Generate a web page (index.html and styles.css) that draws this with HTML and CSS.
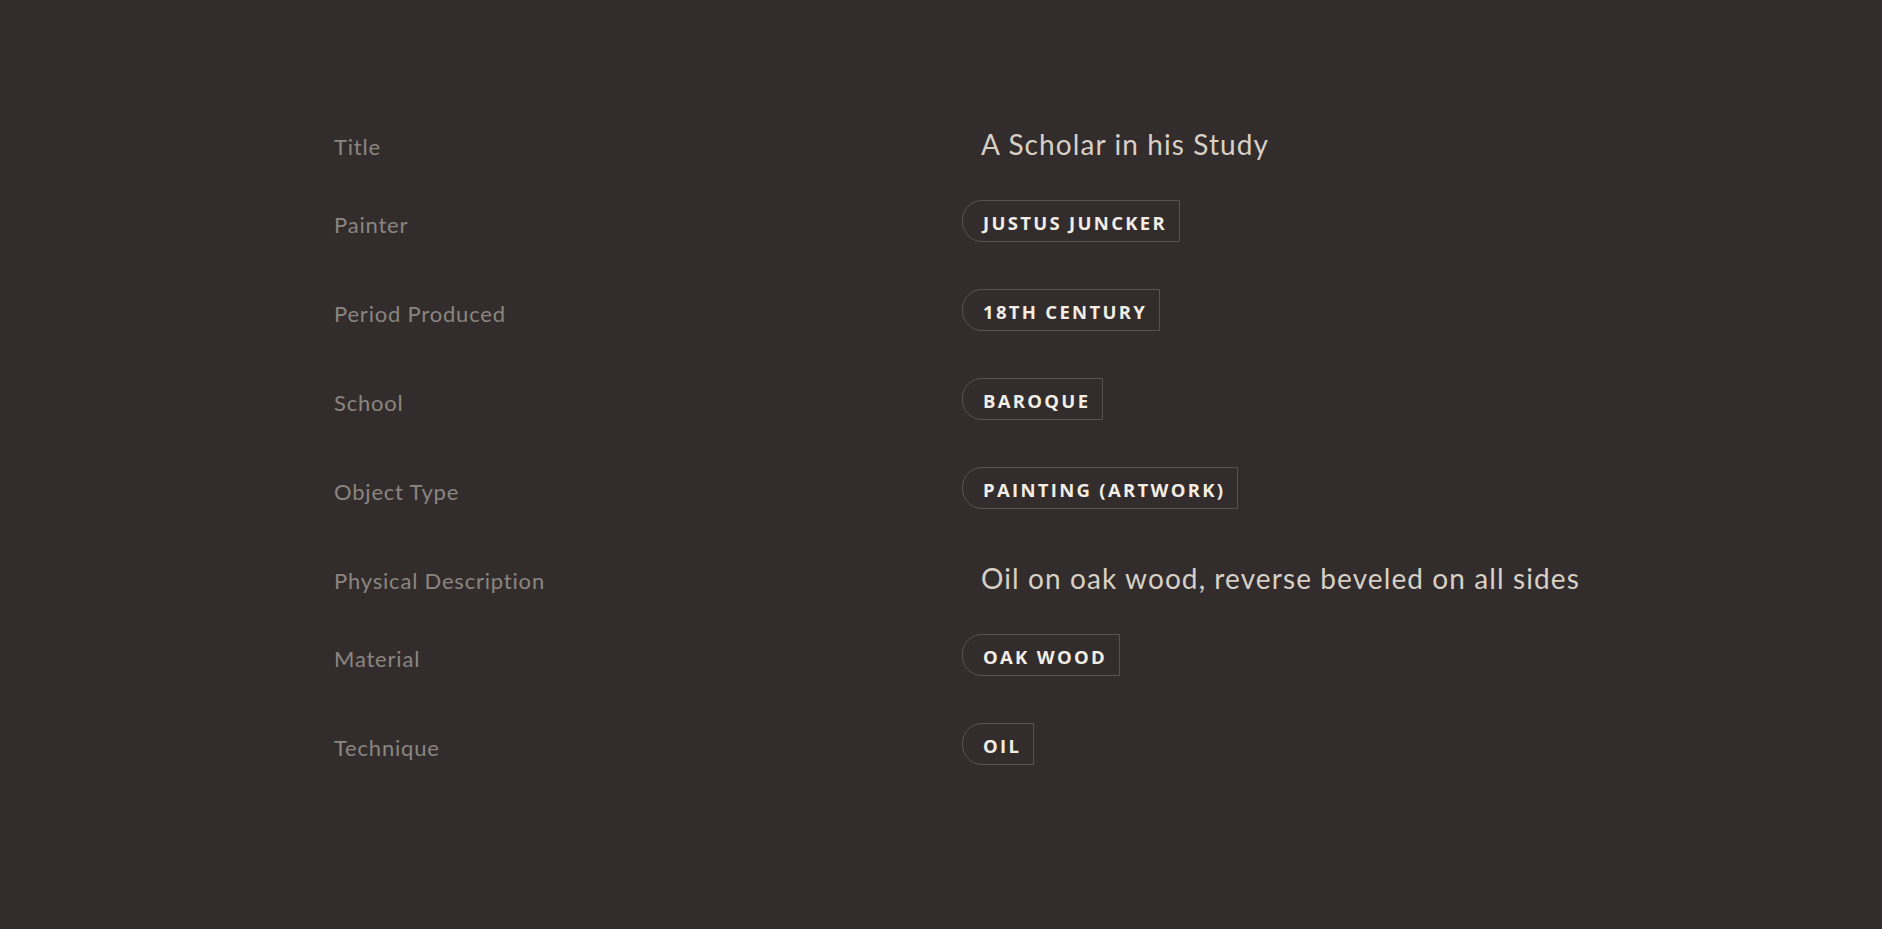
FILE: index.html
```html
<!DOCTYPE html>
<html lang="en">
<head>
<meta charset="utf-8">
<title>A Scholar in his Study</title>
<link rel="stylesheet" href="styles.css">
</head>
<body>
<main class="details">
  <dl class="meta">
    <div class="row row-text">
      <dt class="label">Title</dt>
      <dd class="value"><span class="text">A Scholar in his Study</span></dd>
    </div>
    <div class="row row-tag">
      <dt class="label">Painter</dt>
      <dd class="value"><span class="tag">Justus Juncker</span></dd>
    </div>
    <div class="row row-tag">
      <dt class="label">Period Produced</dt>
      <dd class="value"><span class="tag">18th Century</span></dd>
    </div>
    <div class="row row-tag">
      <dt class="label">School</dt>
      <dd class="value"><span class="tag">Baroque</span></dd>
    </div>
    <div class="row row-tag">
      <dt class="label">Object Type</dt>
      <dd class="value"><span class="tag">Painting (Artwork)</span></dd>
    </div>
    <div class="row row-text">
      <dt class="label">Physical Description</dt>
      <dd class="value"><span class="text">Oil on oak wood, reverse beveled on all sides</span></dd>
    </div>
    <div class="row row-tag">
      <dt class="label">Material</dt>
      <dd class="value"><span class="tag">Oak Wood</span></dd>
    </div>
    <div class="row row-tag">
      <dt class="label">Technique</dt>
      <dd class="value"><span class="tag">Oil</span></dd>
    </div>
  </dl>
</main>
</body>
</html>
```

FILE: styles.css
```css
html, body {
  margin: 0;
  padding: 0;
  background: #322d2c;
  height: 100%;
}

body {
  font-family: Lato, "Open Sans", sans-serif;
}

.details {
  padding: 122px 0 0 334px;
}

.meta {
  margin: 0;
}

.row {
  display: grid;
  grid-template-columns: 628px 1fr;
  align-items: start;
}

.row-text {
  height: 78px;
}

.row-tag {
  height: 89px;
}

.label {
  margin: 0;
  font-size: 22px;
  letter-spacing: 0.8px;
  line-height: 44px;
  padding-top: 3px;
  color: #8b8580;
}

.value {
  margin: 0;
}

.text {
  display: block;
  padding-left: 19px;
  font-size: 28px;
  letter-spacing: 1.1px;
  line-height: 44px;
  color: #d8d0c6;
}

.tag {
  display: inline-flex;
  align-items: center;
  box-sizing: border-box;
  height: 42px;
  padding: 2px 12px 0 20px;
  border: 1px solid #58534f;
  border-radius: 20px 0 0 20px;
  font-family: "Open Sans", sans-serif;
  font-weight: 700;
  font-size: 18.5px;
  letter-spacing: 2.3px;
  text-transform: uppercase;
  color: #f2ede5;
}
```
